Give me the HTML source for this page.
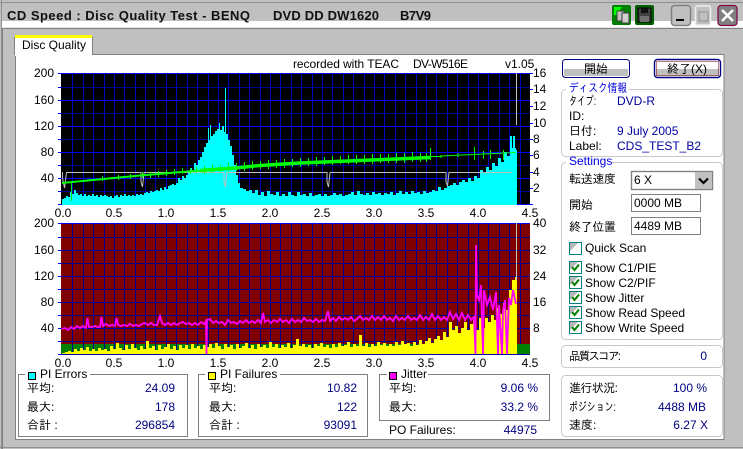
<!DOCTYPE html>
<html><head><meta charset="utf-8"><title>CD Speed</title>
<style>
html,body{margin:0;padding:0;background:#c0c0c0;width:743px;height:449px;overflow:hidden}
svg{display:block}
text{font-family:"Liberation Sans","IPAGothic","Noto Sans CJK JP",sans-serif;font-size:12px;fill:#000}
.v{fill:#000080}
.b{fill:#0000e0}
.e{text-anchor:end}
.m{text-anchor:middle}
.t{font-weight:bold;font-size:13px;fill:#111}
</style></head><body>
<svg width="743" height="449" viewBox="0 0 743 449" xmlns="http://www.w3.org/2000/svg">
<defs>
<path id="vg" fill="none" d="M72.5 0V132M83.5 0V132M93.5 0V132M104.5 0V132M114.5 0V132M124.5 0V132M135.5 0V132M145.5 0V132M155.5 0V132M166.5 0V132M176.5 0V132M187.5 0V132M197.5 0V132M208.5 0V132M218.5 0V132M228.5 0V132M239.5 0V132M249.5 0V132M260.5 0V132M270.5 0V132M280.5 0V132M291.5 0V132M301.5 0V132M312.5 0V132M322.5 0V132M332.5 0V132M343.5 0V132M353.5 0V132M364.5 0V132M374.5 0V132M384.5 0V132M395.5 0V132M405.5 0V132M416.5 0V132M426.5 0V132M436.5 0V132M447.5 0V132M457.5 0V132M468.5 0V132M478.5 0V132M488.5 0V132M499.5 0V132M509.5 0V132M520.5 0V132"/>
<path id="hmin" fill="none" d="M61 14.5H530M61 40.5H530M61 66.5H530M61 92.5H530M61 118.5H530"/>
<path id="hmaj" fill="none" d="M61 .5H530M61 27.5H530M61 53.5H530M61 79.5H530M61 105.5H530M61 131.5H530"/>
<path id="tk" fill="none" stroke="#0000ff" d="M58 .5H61M58 14.5H61M58 27.5H61M58 40.5H61M58 53.5H61M58 66.5H61M58 79.5H61M58 92.5H61M58 105.5H61M58 118.5H61M58 131.5H61"/>
<g id="cb"><rect x=".5" y=".5" width="12" height="12" fill="#fff" stroke="#008080"/><path d="M1 1H9L1 9Z" fill="#b8b8b8"/></g>
<path id="ck" d="M3 6L5.5 9L10 3.5" fill="none" stroke="#008000" stroke-width="2"/>
</defs>

<!-- window -->
<rect width="743" height="449" fill="#c0c0c0"/>
<path d="M0 2.5H743M1.5 0V449M0 447.5H743" stroke="#909090" fill="none"/>
<rect x="2" y="21" width="741" height="6" fill="#fff"/>
<rect x="2" y="27" width="741" height="1" fill="#e8e8e8"/>
<path d="M2.5 449V28.5H743" stroke="#808080" fill="none"/>
<text class="t" x="7" y="20" textLength="243" lengthAdjust="spacing">CD Speed : Disc Quality Test - BENQ</text>
<text class="t" x="273" y="20" textLength="106" lengthAdjust="spacing">DVD DD DW1620</text>
<text class="t" x="400" y="20" textLength="31" lengthAdjust="spacing">B7V9</text>

<!-- title icons -->
<rect x="612" y="5" width="19" height="20" rx="2" fill="#008000"/>
<path d="M614 7h8l-6 8h-2z" fill="#00ff00"/>
<rect x="617" y="11" width="7" height="10" fill="#c0c0c0" stroke="#404040"/>
<rect x="622" y="13" width="7" height="10" fill="#d0d0d0" stroke="#404040"/>
<rect x="635" y="5" width="19" height="20" rx="2" fill="#006000"/>
<rect x="638" y="8" width="13" height="14" fill="#404040" stroke="#000"/>
<rect x="641" y="8" width="7" height="5" fill="#111"/>
<rect x="640" y="16" width="9" height="6" fill="#707070"/>
<rect x="671.5" y="5.5" width="19" height="20" rx="3" fill="#c0c0c0" stroke="#808080" stroke-width="1.5"/>
<rect x="676" y="19" width="8" height="2" fill="#000"/>
<rect x="695.5" y="6" width="15" height="19" rx="2" fill="#c0c0c0" stroke="#eee" stroke-width="1.5"/>
<rect x="699" y="12" width="9" height="9" fill="none" stroke="#909090"/>
<rect x="718" y="5.5" width="19" height="20" rx="3" fill="#808080" stroke="#800040" stroke-width="1.2"/>
<path d="M722 10L733 21M733 10L722 21" stroke="#fff" stroke-width="2.4"/>

<!-- tab & content -->
<rect x="15.5" y="54.5" width="708.5" height="385" fill="#fff" stroke="#808080"/>
<rect x="15" y="37" width="77" height="19" fill="#fff"/>
<path d="M14.5 55V37M92.5 37V54" stroke="#808080" fill="none"/>
<rect x="15" y="35" width="77" height="3" fill="#ffff00"/>
<text x="22" y="49">Disc Quality</text>
<text x="293" y="68" textLength="106" lengthAdjust="spacing">recorded with TEAC</text>
<text x="413" y="68" textLength="55" lengthAdjust="spacing">DV-W516E</text>
<text x="505" y="68">v1.05</text>

<!-- top plot -->
<rect x="61" y="73" width="469" height="132"/>
<use href="#vg" x="0" y="73" stroke="#0000c0"/>
<use href="#hmin" x="0" y="73" stroke="#000090"/>
<use href="#hmaj" x="0" y="73" stroke="#0000ff"/>
<use href="#tk" x="0" y="73"/>
<path fill="#00ffff" d="M62 205V199h2V198h2V196h2V197h2V192h2V194h2V190h2V193h2V195h2V194h2V196h2V194h2V196h2V195h2V196h2V194h2V196h2V195h2V197h2V195h2V196h2V195h2V196h2V197h2V196h2V198h2V196h2V195h2V197h2V195h2V196h2V194h2V196h2V195h2V196h2V195h2V196h2V194h2V195h2V194h2V195h2V193h2V192h2V193h2V191h2V192h2V191h2V190h2V191h2V188h2V190h2V187h2V189h2V186h2V185H172V184H174V185H176V183H178V178H180V180H182V176H184V178H186V175H188V172H190V168H192V170H194V163H196V165H198V160H200V157H202V152H204V147H206V143H208V128H209V140H210V125H211V136H213V134H215V131H217V129H219V123H220V130H222V126H224V132H225V88H226V134H228V140H230V146H232V155H234V165H236V175H238V183H240
V188h3V189h3V191h3V190h3V193h3V190h3V195h3V192h3V196h3V191h3
V194h3V195h3V192h3V196h3V194h3V196h3V192h3V195h3V196h3V192h3
V195h3V194h3V196h3V193h3V196h3V195h3V194h3V196h3V194h3V196h3
V195h3V193h3V195h3V194h3V196h3V195h3V194h3V192h3V195h3V191h3
V194h3V195h3V193h3V195h3V192h3V194h3V193h3V195h3V193h3V194h3
V192h3V195h3V193h3V191h3V194h3V192h3V194h3V191h3V193h3V192h3
V194h3V191h3V193h3V192h3V190h3V191h3V187h3V190h3V188h3V186h3
V185h3V183h3V185h3V182h3V180h3V182h3V178h3V181h3V176h3V178h3
V170h3V173h3V167h3V170h3V163h3V166h3V158h3V162h3V152h3V156h3
V136H512V148H513V136H515V148H516V150H517V205Z"/>
<path fill="none" stroke="#c0c0c0" d="M62.5 172V178L64.5 188L66.5 172.5H141V182L142.5 187L144 172.5H224V182L225.5 187L227 172.5H327V182L328.5 187L330 172.5H446V182L447.5 186L449 172.5H512"/>
<path fill="none" stroke="#c0c0c0" d="M516.5 73V125"/>
<!-- green write-speed trace -->
<path fill="none" stroke="#00e800" d="M71.5 181V201"/>
<path fill="none" stroke="#00ff00" stroke-width="2" d="M62 183L140 175.5L200 170.5"/>
<path fill="none" stroke="#00ff00" stroke-width="3.4" d="M200 170.5L235 168L260 165.5L300 163L372 160L430 157.5"/>
<path fill="none" stroke="#00ff00" d="M430 156.5L516 152.5M430.5 148V160M474.5 147V160M483.5 151V159M490.5 150V159M503.5 150V160M441 155V158M458 153V157
M102.5 176V181M118.5 175V180M130.5 174V179M142.5 172V178M150.5 172V178M158.5 171V177M166.5 170V176M174.5 169V175M182.5 168V174M190.5 168V174M196.5 167V173
M204.5 166V174M212.5 165V173M220.5 165V172M228.5 163V172M236.5 163V171M244.5 162V171M252.5 161V170M260.5 161V169M268.5 160V169M276.5 160V168M284.5 159V168M292.5 159V167M300.5 158V167M308.5 158V166M316.5 157V166M324.5 157V165M332.5 156V165M340.5 156V164M348.5 155V164M356.5 155V164M364.5 155V164M372.5 154V164M380.5 154V163M388.5 154V163M396.5 153V163M404.5 153V163M412.5 152V162M420.5 153V162M426.5 153V162"/>

<!-- bottom plot -->
<rect x="61" y="223" width="469" height="132" fill="#800000"/>
<rect x="61" y="344" width="469" height="10" fill="#008000"/>
<use href="#vg" x="0" y="223" stroke="#000090"/>
<use href="#hmin" x="0" y="223" stroke="#000088"/>
<use href="#hmaj" x="0" y="223" stroke="#0000a8"/>
<rect x="61" y="223" width="469" height="1" fill="#0000ff"/>
<use href="#tk" x="0" y="223"/>
<path fill="#ffff00" d="M62 354
V353h3V352h3V351h3V352h3V349h3V351h3V348h3V350h3V347h3V351h3
V349h3V351h3V348h3V350h3V349h3V351h3V346h3V349h3V343h3V348h3
V350h3V345h3V349h3V344h3V348h3V350h3V346h3V349h3V341h3V348h3
V346h3V350h3V345h3V349h3V347h3V344h3V349h3V346h3V350h3V345h3
V348h3V345h3V349h3V344h3V348h3V346h3V349h3V345h3V347h3V344h3
V348h3V343h3V346h3V349h3V344h3V347h3V345h3V349h3V344h3V348h3
V346h3V343h3V348h3V345h3V349h3V344h3V347h3V345h3V348h3V342h3
V347h3V344h3V348h3V345h3V347h3V343h3V348h3V345h3V339h3V346h3
V344h3V347h3V345h3V348h3V344h3V346h3V343h3V347h3V345h3V348h3
V344h3V347h3V343h3V346h3V345h3V342h3V347h3V344h3V346h3V335h3
V346h3V343h3V347h3V344h3V346h3V342h3V345h3V343h3V346h3V344h3
V346h3V342h3V345h3V341h3V344h3V343h3V346h3V342h3V345h3V340h3
V344h3V341h3V338h3V343h3V339h3V336h3V340h3V332h3V337h3V322h3
V330h3V326h3V333h3V328h3V322h3V330h3V324h3V320h3V330h3V318h3
V328h3V318h3V322h3V315h3V320h3V308h3V314h3V303h3V310h3V290h3
V280H515V277H517V354Z"/>
<path fill="none" stroke="#c0c0c0" d="M516.5 223V280"/>
<path fill="none" stroke="#ff00ff" stroke-width="1.8" d="M62 329L65 328L68 330L71 327L74 329L77 326L80 328L83 326L86 328L87.5 318L89 327L92 327L95 326L98 327L100 327L101.5 317L103 326L106 324L109 326L112 325L115 326L116.5 318L118 325L121 326L124 325L127 326L130 324L133 326L136 325L139 326L142 324L145 323L148 325L151 323L154 325L157 325L160 316L162 323L165 325L168 323L171 325L174 323L177 325L180 323L183 322L186 324L189 323L192 325L195 323L198 325L201 322L204 324L206 321L206.5 354L207 320L210 319L213 323L216 321L219 323L222 322L225 325L228 320L231 323L234 322L237 324L240 321L243 323L246 320L249 323L252 321L255 323L258 320L261 323L263 313L265 322L268 320L271 323L274 320L277 322L280 319L283 322L286 320L289 323L292 319L295 322L298 320L301 322L304 318L307 321L310 320L313 322L316 319L319 322L322 320L325 321L328 311L330 321L333 318L336 321L339 317L342 320L345 318L348 320L351 317L354 321L357 319L360 316L363 320L366 318L369 320L372 316L375 320L378 317L381 320L384 316L387 320L390 318L393 321L396 316L399 320L402 318L405 320L408 316L411 320L414 318L417 320L420 315L423 320L426 317L429 320L432 314L435 320L438 316L441 320L444 317L447 320L450 312L453 319L456 314L459 320L462 313L465 320L468 315L471 320L474 317L475.5 354L476 245L477 295L479 300L481 285L483 354L484 290L487 305L490 297L493 310L496 292L498 354L499 305L502 354L503 310L505 300L507 354L509 298L511 305L513 290L516 304"/>
<rect x="517" y="223" width="13" height="121" fill="#800000"/>
<rect x="517" y="344" width="13" height="10" fill="#008000"/>
<path d="M520.5 223V344" stroke="#000090"/>
<path d="M517 237.5H530M517 263.5H530M517 289.5H530M517 315.5H530" stroke="#000088"/>
<path d="M517 250.5H530M517 276.5H530M517 302.5H530M517 328.5H530" stroke="#0000a8"/>
<rect x="517" y="223" width="13" height="1" fill="#0000ff"/>

<!-- right ticks top -->
<path stroke="#0000ff" fill="none" d="M530 73.5H533M530 89.5H533M530 106.5H533M530 123.5H533M530 139.5H533M530 155.5H533M530 172.5H533M530 188.5H533M530 204.5H533"/>

<!-- axis labels -->
<text class="e" x="54" y="77">200</text><text class="e" x="54" y="104">160</text><text class="e" x="54" y="130">120</text><text class="e" x="54" y="156">80</text><text class="e" x="54" y="182">40</text>
<text class="e" x="54" y="227">200</text><text class="e" x="54" y="254">160</text><text class="e" x="54" y="280">120</text><text class="e" x="54" y="306">80</text><text class="e" x="54" y="332">40</text>
<text x="533" y="77">16</text><text x="533" y="93">14</text><text x="533" y="110">12</text><text x="533" y="127">10</text><text x="533" y="143">8</text><text x="533" y="159">6</text><text x="533" y="176">4</text><text x="533" y="192">2</text>
<text x="533" y="227">40</text><text x="533" y="254">32</text><text x="533" y="280">24</text><text x="533" y="306">16</text><text x="533" y="332">8</text>
<text class="m" x="63" y="217">0.0</text><text class="m" x="114" y="217">0.5</text><text class="m" x="166" y="217">1.0</text><text class="m" x="218" y="217">1.5</text><text class="m" x="270" y="217">2.0</text><text class="m" x="322" y="217">2.5</text><text class="m" x="374" y="217">3.0</text><text class="m" x="426" y="217">3.5</text><text class="m" x="478" y="217">4.0</text><text class="m" x="530" y="217">4.5</text>
<text class="m" x="63" y="367">0.0</text><text class="m" x="114" y="367">0.5</text><text class="m" x="166" y="367">1.0</text><text class="m" x="218" y="367">1.5</text><text class="m" x="270" y="367">2.0</text><text class="m" x="322" y="367">2.5</text><text class="m" x="374" y="367">3.0</text><text class="m" x="426" y="367">3.5</text><text class="m" x="478" y="367">4.0</text><text class="m" x="530" y="367">4.5</text>

<!-- legend boxes -->
<g fill="none" stroke="#808080">
<rect x="18.5" y="374.5" width="169" height="62"/>
<rect x="198.5" y="374.5" width="169" height="62"/>
<rect x="379.5" y="374.5" width="170" height="46"/>
</g>
<rect x="25" y="370" width="65" height="9" fill="#fff"/>
<rect x="205" y="370" width="75" height="9" fill="#fff"/>
<rect x="387" y="370" width="41" height="9" fill="#fff"/>
<rect x="28.5" y="372.5" width="7" height="7" fill="#00ffff" stroke="#000"/>
<rect x="208.5" y="372.5" width="7" height="7" fill="#ffff00" stroke="#000"/>
<rect x="389.5" y="372.5" width="7" height="7" fill="#ff00ff" stroke="#000"/>
<text x="40" y="378">PI Errors</text>
<text x="220" y="378">PI Failures</text>
<text x="401" y="378">Jitter</text>
<text x="27" y="392">平均:</text><text x="27" y="411">最大:</text><text x="27" y="429">合計 :</text>
<text class="v e" x="175" y="392">24.09</text><text class="v e" x="175" y="411">178</text><text class="v e" x="175" y="429">296854</text>
<text x="209" y="392">平均:</text><text x="209" y="411">最大:</text><text x="209" y="429">合計 :</text>
<text class="v e" x="357" y="392">10.82</text><text class="v e" x="357" y="411">122</text><text class="v e" x="357" y="429">93091</text>
<text x="389" y="392">平均:</text><text x="389" y="411">最大:</text>
<text class="v e" x="538" y="392">9.06 %</text><text class="v e" x="538" y="411">33.2 %</text>
<text x="389" y="434">PO Failures:</text><text class="v e" x="537" y="434">44975</text>

<!-- buttons -->
<rect x="562.5" y="59.5" width="67" height="18" rx="3" fill="#fff" stroke="#000080"/>
<rect x="564" y="69" width="64" height="7" fill="#c0c0c0"/>
<text class="m" x="596" y="73">開始</text>
<rect x="654.5" y="59.5" width="66" height="18" rx="3" fill="#fff" stroke="#000080" stroke-width="1.4"/>
<rect x="656" y="69" width="63" height="7" fill="#c0c0c0"/>
<rect x="656.5" y="61.5" width="62" height="14" fill="none" stroke="#800000" stroke-dasharray="1 1"/>
<text class="m" x="687" y="73">終了(X)</text>

<!-- panels -->
<g fill="none" stroke="#c8c8c8">
<rect x="561.5" y="89.5" width="161" height="67" rx="4"/>
<rect x="561.5" y="162.5" width="161" height="177" rx="4"/>
<rect x="561.5" y="345.5" width="161" height="22" rx="4"/>
<rect x="561.5" y="375.5" width="161" height="61" rx="4"/>
</g>
<rect x="566" y="84" width="63" height="9" fill="#fff"/>
<rect x="566" y="157" width="46" height="9" fill="#fff"/>
<text class="b" x="569" y="92" textLength="58" lengthAdjust="spacingAndGlyphs">ディスク情報</text>
<text class="b" x="569" y="165">Settings</text>
<text x="569" y="105" textLength="27" lengthAdjust="spacingAndGlyphs">タイプ:</text><text x="617" y="105" style="fill:#0000a0">DVD-R</text>
<text x="569" y="120">ID:</text>
<text x="569" y="135">日付:</text><text x="617" y="135" style="fill:#0000a0">9 July 2005</text>
<text x="569" y="150">Label:</text><text x="617" y="150" style="fill:#0000a0">CDS_TEST_B2</text>

<text x="569" y="183" textLength="47">転送速度</text>
<rect x="631.5" y="171.5" width="81" height="18" fill="#fff" stroke="#808080" stroke-width="1.4"/>
<text x="634" y="184">6 X</text>
<rect x="695" y="172" width="17" height="17" fill="#c0c0c0"/>
<path d="M699 178.5L703.5 183L708 178.5" fill="none" stroke="#000" stroke-width="2.2"/>
<text x="569" y="209">開始</text>
<rect x="631.5" y="194.5" width="69" height="17" fill="#fff" stroke="#808080"/>
<text x="634" y="207">0000 MB</text>
<text x="569" y="231" textLength="47">終了位置</text>
<rect x="631.5" y="217.5" width="69" height="17" fill="#fff" stroke="#808080"/>
<text x="634" y="230">4489 MB</text>

<use href="#cb" x="569" y="242"/><text x="585" y="252">Quick Scan</text>
<use href="#cb" x="569" y="261"/><use href="#ck" x="569" y="261"/><text x="585" y="272">Show C1/PIE</text>
<use href="#cb" x="569" y="276"/><use href="#ck" x="569" y="276"/><text x="585" y="287">Show C2/PIF</text>
<use href="#cb" x="569" y="291"/><use href="#ck" x="569" y="291"/><text x="585" y="302">Show Jitter</text>
<use href="#cb" x="569" y="306"/><use href="#ck" x="569" y="306"/><text x="585" y="317">Show Read Speed</text>
<use href="#cb" x="569" y="321"/><use href="#ck" x="569" y="321"/><text x="585" y="332">Show Write Speed</text>

<text x="569" y="360" textLength="52" lengthAdjust="spacing" style="font-size:11.5px">品質スコア:</text><text class="v e" x="707" y="360">0</text>
<text x="569" y="392" textLength="49">進行状況:</text><text class="v e" x="707" y="392">100 %</text>
<text x="569" y="411" textLength="47" lengthAdjust="spacingAndGlyphs">ポジション:</text><text class="v e" x="706" y="411">4488 MB</text>
<text x="569" y="429">速度:</text><text class="v e" x="708" y="429">6.27 X</text>
</svg>
</body></html>
